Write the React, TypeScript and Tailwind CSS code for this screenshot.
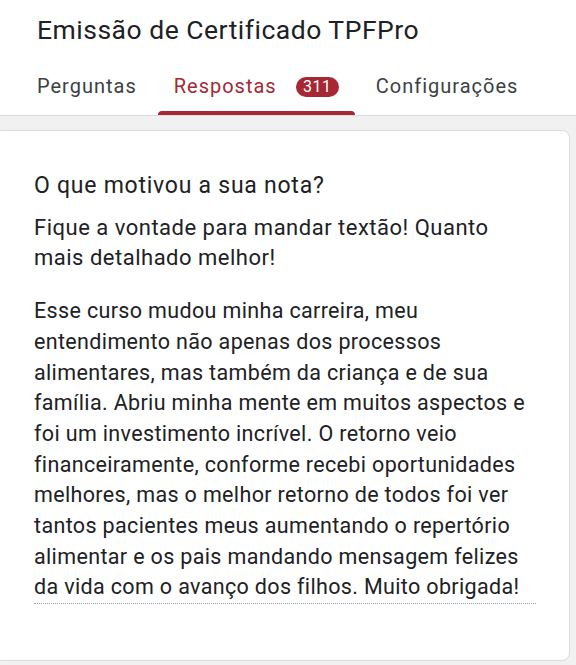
import React from 'react';

const font = { fontFamily: 'Roboto, "Noto Sans", sans-serif' };

const tabs = [
  { label: 'Perguntas', active: false },
  { label: 'Respostas', active: true, badge: '311' },
  { label: 'Configurações', active: false },
];

const answer = [
  'Esse curso mudou minha carreira, meu',
  'entendimento não apenas dos processos',
  'alimentares, mas também da criança e de sua',
  'família. Abriu minha mente em muitos aspectos e',
  'foi um investimento incrível. O retorno veio',
  'financeiramente, conforme recebi oportunidades',
  'melhores, mas o melhor retorno de todos foi ver',
  'tantos pacientes meus aumentando o repertório',
  'alimentar e os pais mandando mensagem felizes',
  'da vida com o avanço dos filhos. Muito obrigada!',
];

export default function App() {
  return (
    <div className="min-h-[665px] w-[576px] overflow-hidden bg-[#f1f1f1] text-[#202124]" style={font}>
      {/* header */}
      <div className="bg-white border-b border-[#dadce0] pt-[14px]">
        <h1 className="pl-[37px] text-[26.5px] leading-8 font-normal tracking-[0.5px] text-[#202124]">
          Emissão de Certificado TPFPro
        </h1>
        <div className="mt-[28px] flex gap-[5px] pl-[21px]">
          {tabs.map(tab => (
            <div key={tab.label} className="flex flex-col">
              <div className="flex h-6 items-center px-4">
                <span
                  className={`text-[20px] leading-6 tracking-[1px] ${tab.active ? 'text-[#a52834]' : 'text-[#3c4043]'}`}
                >
                  {tab.label}
                </span>
                {tab.badge && (
                  <span className="ml-[19px] mt-[2px] flex h-5 w-[43px] items-center justify-center rounded-full bg-[#a52834] text-[16px] tracking-[0.5px] text-white">
                    {tab.badge}
                  </span>
                )}
              </div>
              <div
                className={`mt-[13px] h-1 rounded-t-[4px] ${tab.active ? 'bg-[#a52834]' : 'bg-transparent'}`}
              ></div>
            </div>
          ))}
        </div>
      </div>

      {/* response card */}
      <div className="mt-[14px] ml-[-6px] mr-[6px] rounded-lg border border-[#dadce0] bg-white pl-[39px] pt-[40px] pb-[56px]">
        <div className="w-[502px] leading-[30.7px]">
          <div className="text-[23px] tracking-[0.75px]">O que motivou a sua nota?</div>
          <div className="mt-[11px] text-[22px] tracking-[0.5px]">
            Fique a vontade para mandar textão! Quanto
            <br />
            mais detalhado melhor!
          </div>
          <div className="mt-[22px] border-b border-dotted border-[#9aa0a6] text-[21.5px] tracking-[0.35px]">
            {answer.map((line, i) => (
              <div key={i} className="whitespace-nowrap">
                {line}
              </div>
            ))}
          </div>
        </div>
      </div>
    </div>
  );
}
